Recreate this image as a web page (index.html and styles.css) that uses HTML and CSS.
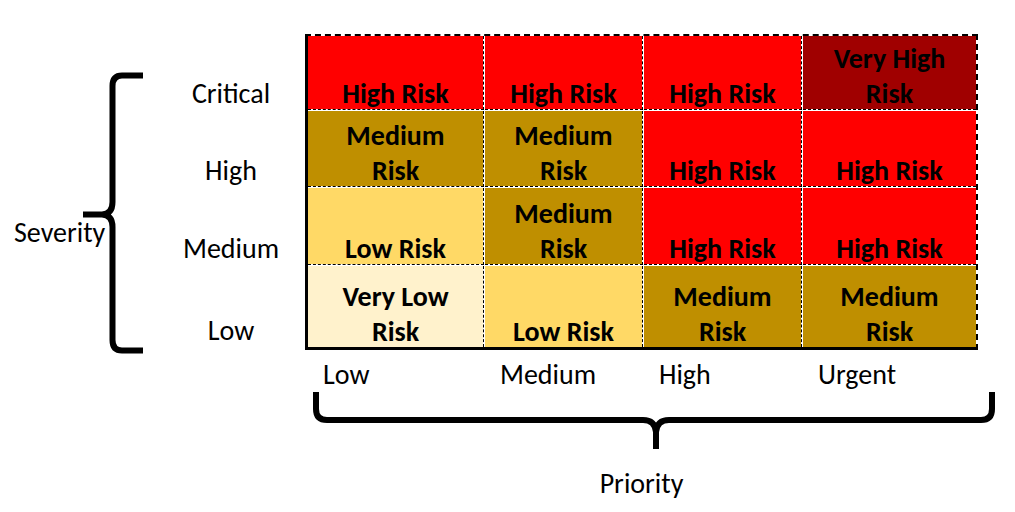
FILE: index.html
```html
<!DOCTYPE html>
<html lang="en">
<head>
<meta charset="utf-8">
<title>Risk Matrix</title>
<link rel="stylesheet" href="styles.css">
</head>
<body>
<div class="page">
  <div class="severity">
    <svg class="brace-v" width="157" height="330" viewBox="0 0 157 330" aria-hidden="true">
      <path d="M143,41.5 H122 Q112.5,41.5 112.5,52 V168 Q112.5,180 102,180.5 H83 M102,180.5 Q112.5,181 112.5,193 V306 Q112.5,316.5 122,316.5 H143" />
    </svg>
    <span class="severity-label">Severity</span>
  </div>

  <div class="row-labels">
    <div class="row-label"><span>Critical</span></div>
    <div class="row-label"><span>High</span></div>
    <div class="row-label"><span>Medium</span></div>
    <div class="row-label"><span>Low</span></div>
  </div>

  <div class="matrix">
    <div class="cell red"><span>High Risk</span></div>
    <div class="cell red"><span>High Risk</span></div>
    <div class="cell red"><span>High Risk</span></div>
    <div class="cell darkred last-col"><span>Very High<br>Risk</span></div>

    <div class="cell gold"><span>Medium<br>Risk</span></div>
    <div class="cell gold"><span>Medium<br>Risk</span></div>
    <div class="cell red"><span>High Risk</span></div>
    <div class="cell red last-col"><span>High Risk</span></div>

    <div class="cell yellow"><span>Low Risk</span></div>
    <div class="cell gold"><span>Medium<br>Risk</span></div>
    <div class="cell red"><span>High Risk</span></div>
    <div class="cell red last-col"><span>High Risk</span></div>

    <div class="cell cream last-row"><span>Very Low<br>Risk</span></div>
    <div class="cell yellow last-row"><span>Low Risk</span></div>
    <div class="cell gold last-row"><span>Medium<br>Risk</span></div>
    <div class="cell gold last-row last-col"><span>Medium<br>Risk</span></div>
  </div>

  <div class="col-labels">
    <div class="col-label">Low</div>
    <div class="col-label">Medium</div>
    <div class="col-label">High</div>
    <div class="col-label">Urgent</div>
  </div>

  <svg class="brace-h" width="695" height="64" viewBox="0 0 695 64" aria-hidden="true">
    <path d="M11,0 V17 Q11,28 22,28 H338 Q350,28 351,40 V57 M351,40 Q352,28 364,28 H676 Q687,28 687,17 V0" />
  </svg>

  <div class="priority">Priority</div>
</div>
</body>
</html>
```

FILE: styles.css
```css
html, body {
  margin: 0;
  padding: 0;
  background: #ffffff;
}

body {
  width: 1015px;
  height: 512px;
  overflow: hidden;
  font-family: Carlito, Calibri, Lato, "Liberation Sans", sans-serif;
  font-size: 28px;
  line-height: 34px;
  color: #000000;
}

.page {
  display: grid;
  grid-template-columns: 157px 148px 673px;
  grid-template-rows: 316px auto auto auto;
  padding-top: 34px;
}

/* Severity axis */
.severity {
  grid-column: 1;
  grid-row: 1;
  display: grid;
}

.brace-v {
  grid-area: 1 / 1;
  display: block;
  overflow: visible;
}

.brace-v path,
.brace-h path {
  fill: none;
  stroke: #000000;
  stroke-width: 6;
}

.severity-label {
  grid-area: 1 / 1;
  align-self: start;
  justify-self: start;
  margin-top: 182px;
  padding-left: 14px;
}

/* Row labels */
.row-labels {
  grid-column: 2;
  grid-row: 1;
  display: grid;
  grid-template-rows: 74px 76px 77px 81px;
  row-gap: 1px;
  padding-top: 2px;
}

.row-label {
  display: flex;
  align-items: flex-end;
  justify-content: center;
}

.row-label span {
  display: block;
  margin-bottom: -1px;
}

/* Matrix */
.matrix {
  grid-column: 3;
  grid-row: 1;
  display: grid;
  grid-template-columns: 176px 158px 158px 173px;
  grid-template-rows: 74px 76px 77px 81px;
  gap: 1px;
  background: #ffffff;
  border-left: 3px solid #000000;
  border-bottom: 3px solid #000000;
  border-top: 2px dashed #000000;
  border-right: 2px dashed #000000;
}

.cell {
  display: flex;
  flex-direction: column;
  justify-content: flex-end;
  align-items: center;
  text-align: center;
  font-weight: bold;
  border-right: 1px dashed #000000;
  border-bottom: 1px dashed #000000;
  background-clip: padding-box;
}

.cell span {
  display: block;
  line-height: 35px;
  margin-bottom: -2px;
}

.cell.last-col { border-right: 0; }
.cell.last-row { border-bottom: 0; }

.red { background-color: #ff0000; }
.darkred { background-color: #a00000; }
.gold { background-color: #bf8f00; }
.yellow { background-color: #ffd966; }
.cream { background-color: #fff2cc; }

/* Column labels */
.col-labels {
  grid-column: 3;
  grid-row: 2;
  display: grid;
  grid-template-columns: 176px 158px 158px 173px;
  column-gap: 1px;
  padding-left: 3px;
  padding-top: 8px;
}

.col-label {
  padding-left: 15px;
}

/* Priority axis */
.brace-h {
  grid-column: 3;
  grid-row: 3;
  display: block;
  overflow: visible;
}

.priority {
  grid-column: 3;
  grid-row: 4;
  text-align: center;
  margin-top: 11px;
}
```
